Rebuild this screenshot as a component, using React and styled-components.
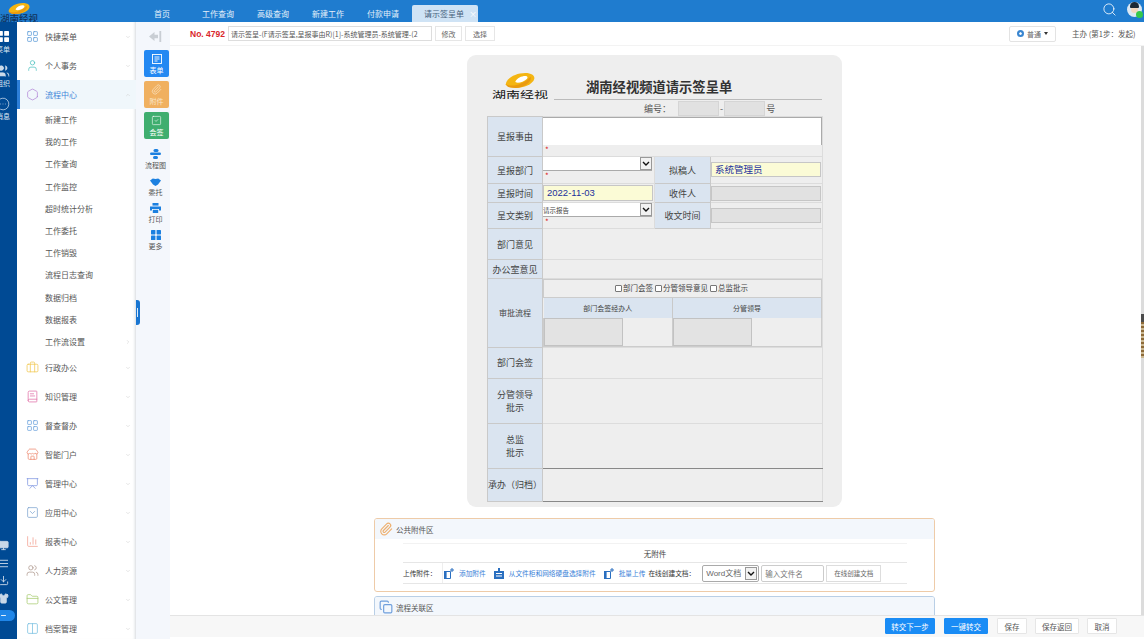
import React from "react";
import styled, { createGlobalStyle } from "styled-components";
import {
  LayoutGrid, Users, MessageCircleMore, Monitor, AlignJustify, Download, Shirt, Minus,
  User, Hexagon, ChevronDown, ChevronUp, ChevronRight, Briefcase, BookText, Store, Presentation,
  SquareChevronDown, ChartColumn, FolderClosed, Columns2, Paperclip,
  SquareCheck, Search, Copy,
} from "lucide-react";

const CJK = `"Noto Sans CJK SC", "Liberation Sans", sans-serif`;

const selectArrow = `url("data:image/svg+xml,%3Csvg xmlns='http://www.w3.org/2000/svg' width='12' height='13'%3E%3Crect x='.5' y='.5' width='11' height='12' fill='%23f2f2f2' stroke='%23999'/%3E%3Cpath d='M3 5l3 3 3-3' fill='none' stroke='%23111' stroke-width='1.4'/%3E%3C/svg%3E")`;

const GlobalStyle = createGlobalStyle`
  html, body { margin: 0; padding: 0; height: 100%; overflow: hidden; background: #fff; }
  * { box-sizing: border-box; }
  body { font-family: ${CJK}; font-size: 8px; color: #444; }
`;

const Page = styled.div`
  width: 1144px;
  height: 639px;
  display: flex;
  flex-direction: column;
  overflow: hidden;
`;

const Header = styled.header`
  height: 22px;
  flex: none;
  display: flex;
  align-items: flex-end;
  background: #1f7ccf;
`;

const LogoBox = styled.div`
  width: 38px;
  height: 22px;
  flex: none;
  overflow: hidden;
  display: flex;
  flex-direction: column;
  align-items: center;
  color: #10335c;
  font-size: 9.5px;
  font-weight: 500;
  line-height: 9px;
  white-space: nowrap;

  svg { display: block; margin-top: 3px; flex: none; }
`;

const HeaderTabs = styled.nav`
  flex: 1;
  display: flex;
  align-items: flex-end;
  height: 22px;
  padding-left: 116px;
`;

const HeaderTab = styled.a`
  height: 17px;
  line-height: 17px;
  font-size: 8px;
  margin-right: ${(p) => p.$gap}px;
  color: #e4f0fa;
  white-space: nowrap;
`;

const ActiveTab = styled.a`
  width: 66px;
  height: 17px;
  line-height: 17px;
  padding-left: 12px;
  border-radius: 2px 2px 0 0;
  background: #cfe3f5;
  color: #47627d;
  font-size: 8px;
  white-space: nowrap;
  display: flex;
  gap: 5px;

  i { font-style: normal; color: #fff; font-size: 8px; }
`;

const HeaderRight = styled.div`
  display: flex;
  align-items: center;
  gap: 10px;
  height: 22px;
  padding-right: 2px;
  color: #fff;

  > svg { margin-bottom: 3px; }
`;

const Avatar = styled.div`
  position: relative;
  width: 15px;
  height: 15px;
  margin-bottom: 3px;
  border-radius: 50%;
  background: #dbe8f3;

  &::before {
    content: "";
    position: absolute;
    left: 3px;
    top: 0;
    width: 9px;
    height: 6px;
    border-radius: 5px 5px 1px 1px;
    background: #1d2a36;
    z-index: 1;
  }
  &::after {
    content: "";
    position: absolute;
    left: 4px;
    top: 4px;
    width: 7px;
    height: 7px;
    border-radius: 50%;
    background: #f3d7bd;
  }
`;

const OnlineDot = styled.span`
  position: absolute;
  right: -1px;
  bottom: -1px;
  width: 7px;
  height: 7px;
  border-radius: 50%;
  background: #35c84a;
  z-index: 2;
`;

const Body = styled.div`
  flex: 1;
  min-height: 0;
  display: flex;
`;

const Rail = styled.aside`
  width: 17px;
  flex: none;
  background: #004a94;
  overflow: hidden;
  display: flex;
  flex-direction: column;
`;

const RailInner = styled.div`
  width: 34px;
  margin-left: -14px;
  flex: 1;
  display: flex;
  flex-direction: column;
  align-items: center;
  padding-top: 9px;
  color: #dbe7f3;
`;

const RailItem = styled.div`
  height: 33px;
  display: flex;
  flex-direction: column;
  align-items: center;
  font-size: 7px;
  line-height: 9px;
  gap: ${(p) => p.$gap || 1}px;
`;

const RailBottom = styled.div`
  margin-top: auto;
  display: flex;
  flex-direction: column;
  align-items: center;
  gap: 6.5px;
  padding-bottom: 18px;
  color: #c9d8e8;
`;

const RailPill = styled.span`
  width: 24px;
  height: 11px;
  border-radius: 6px;
  background: #1f86e8;
  display: flex;
  align-items: center;
  justify-content: center;
  color: #fff;
`;

const Sidebar = styled.aside`
  width: 119px;
  flex: none;
  overflow: hidden;
  background: #fff;
  box-shadow: inset -3px 0 3px -2px #d5d9de;
`;

const MenuRow = styled.div`
  height: 29px;
  display: flex;
  align-items: center;
  padding: 0 5px 0 6px;
  gap: 6px;
  font-size: 8px;
  color: ${(p) => (p.$active ? "#3f86d8" : "#555")};
  background: ${(p) => (p.$active ? "#f0f7fb" : "transparent")};
  border-left: 3px solid ${(p) => (p.$active ? "#2d7fd8" : "transparent")};

  span { flex: 1; }
`;

const SubRow = styled.div`
  height: 22.2px;
  line-height: 22px;
  padding-left: 28px;
  padding-right: 5px;
  display: flex;
  align-items: center;
  justify-content: space-between;
  font-size: 8px;
  color: #555;
`;

const Tools = styled.div`
  position: relative;
  width: 34px;
  flex: none;
  padding-right: 1px;
  background: #f4f7fc;
  display: flex;
  flex-direction: column;
  align-items: flex-end;
`;

const CollapseHandle = styled.span`
  position: absolute;
  left: 0;
  top: 278px;
  width: 4px;
  height: 25px;
  border-radius: 0 3px 3px 0;
  background: #1976d2;

  &::after {
    content: "";
    position: absolute;
    left: 1px;
    top: 8px;
    width: 1px;
    height: 9px;
    background: #dcecfb;
  }
`;

const BackRow = styled.div`
  width: 33px;
  height: 28px;
  padding-left: 13px;
  display: flex;
  align-items: center;
  color: #c9ced4;
`;

const ToolCard = styled.div`
  width: 25px;
  height: 27px;
  margin-bottom: 4px;
  border-radius: 2px;
  background: ${(p) => p.$color};
  color: ${(p) => p.$text || "#fff"};
  font-size: 7px;
  line-height: 8px;
  display: flex;
  flex-direction: column;
  align-items: center;
  justify-content: center;
  gap: 2px;
`;

const ToolLink = styled.div`
  width: 25px;
  height: 27px;
  margin-right: 1px;
  color: #555;
  font-size: 7px;
  line-height: 9px;
  display: flex;
  flex-direction: column;
  align-items: center;
  justify-content: flex-end;
  gap: 2px;
  white-space: nowrap;

  svg { color: #1c80e0; }
`;

const Main = styled.main`
  flex: 1;
  min-width: 0;
  display: flex;
  flex-direction: column;
  background: #fff;
`;

const TopBar = styled.div`
  height: 24px;
  flex: none;
  display: flex;
  align-items: center;
  padding: 0 4px 0 20px;
  border-bottom: 1px solid #f3f3f3;
`;

const FlowNo = styled.b`
  color: #d9262c;
  font-family: "Liberation Sans", sans-serif;
  font-size: 8.5px;
  margin-right: 3px;
  white-space: nowrap;
`;

const FlowName = styled.input`
  width: 204px;
  height: 15px;
  border: 1px solid #ddd;
  padding: 0 2px;
  font: 7px ${CJK};
  color: #555;
  margin-right: 3px;
`;

const GhostButton = styled.button`
  height: 15px;
  width: ${(p) => p.$w}px;
  margin-right: 3px;
  padding: 0;
  background: #fff;
  border: 1px solid #e6e6e6;
  font: 7px ${CJK};
  color: #666;
`;

const Level = styled.button`
  margin-left: auto;
  width: 47px;
  height: 16px;
  padding: 0;
  background: #fff;
  border: 1px solid #e3e3e3;
  border-radius: 2px;
  font: 7px ${CJK};
  color: #666;
  display: flex;
  align-items: center;
  justify-content: center;
  gap: 3px;

  i {
    width: 7px;
    height: 7px;
    border-radius: 50%;
    background: #3a86d0;
    border: 2px solid #3a86d0;
    box-shadow: inset 0 0 0 2px #fff;
  }
  u {
    border-left: 2.5px solid transparent;
    border-right: 2.5px solid transparent;
    border-top: 3px solid #333;
  }
`;

const StepText = styled.span`
  margin-left: 16px;
  width: 68px;
  font-size: 7.5px;
  color: #555;
  white-space: nowrap;
`;

const Content = styled.div`
  position: relative;
  flex: 1;
  min-height: 0;
  overflow: hidden;
  padding: 9px 5px 0 0;
`;

const ScrollTrack = styled.span`
  position: absolute;
  right: 0;
  top: 0;
  bottom: 0;
  width: 3px;
  background: #dcdcdc;
`;

const ScrollThumb = styled.span`
  position: absolute;
  right: 0;
  top: 268px;
  width: 3px;
  height: 44px;
  background: repeating-linear-gradient(#8d6a38 0 2px, #cbb892 2px 4px);
  border-top: 8px solid #4c4c4c;
`;

const FormPanel = styled.div`
  width: 375px;
  height: 452px;
  margin: 0 auto 11px;
  padding: 15px 20px 0;
  background: #eee;
  border-radius: 9px;
`;

const TitleBlock = styled.div`
  display: flex;
  height: 30px;
`;

const BrandLogo = styled.div`
  width: 67px;
  flex: none;
  padding-top: 3px;
  display: flex;
  flex-direction: column;
  align-items: flex-start;
  font-size: 14px;
  line-height: 12px;
  color: #111;
  white-space: nowrap;

  svg { margin: 0 0 2px 18px; display: block; flex: none; }
  span { margin-left: 5px; transform: scaleY(0.68); transform-origin: top left; }
`;

const FormTitle = styled.h1`
  flex: 1;
  margin: 0;
  padding: 7px 0 0 32px;
  height: 30px;
  border-bottom: 1px solid #bbb;
  font-size: 13.3px;
  line-height: 20px;
  font-weight: 700;
  color: #333;
  white-space: nowrap;
`;

const NumberRow = styled.div`
  height: 16px;
  display: flex;
  align-items: center;
  padding-left: 157px;
  font-size: 9px;
  color: #555;
  gap: 1px;

  span:first-child { margin-right: 6px; }
`;

const NumberInput = styled.span`
  width: 41px;
  height: 15px;
  background: #e1e1e1;
  border: 1px solid #d5d5d5;
`;

const FormTable = styled.table`
  width: 335px;
  table-layout: fixed;
  border-collapse: collapse;
  border-spacing: 0;
`;

const Row = styled.tr`
  height: ${(p) => p.$h}px;
`;

const Label = styled.td`
  background: #dae4f0;
  border: 1px solid #c9c9c9;
  text-align: center;
  font-size: ${(p) => p.$size || 9}px;
  line-height: 13px;
  color: #444;
  padding: 0;
  white-space: nowrap;
`;

const Cell = styled.td`
  position: relative;
  background: #eee;
  border: 1px solid #dcdcdc;
  border-bottom-color: ${(p) => p.$line || "#dcdcdc"};
  padding: ${(p) => p.$pad || 0};
  vertical-align: top;
`;

const Star = styled.div`
  color: #d22;
  font-size: 8px;
  line-height: 8px;
  padding: 1px 0 0 2px;
`;

const Area = styled.textarea`
  display: block;
  width: 100%;
  height: 28px;
  margin: 0;
  border: 1px solid #aaa;
  border-width: 1px 1px 0 0;
  background: #fff;
  resize: none;
  border-radius: 0;
`;

const Pick = styled.select`
  display: block;
  width: 109px;
  height: ${(p) => p.$h}px;
  margin: 0;
  padding: 0;
  font: 6.5px ${CJK};
  color: #444;
  appearance: none;
  background: #fff ${selectArrow} no-repeat right top;
  border: 0;
  border-bottom: 1px solid #aaa;
  border-radius: 0;
`;

const Field = styled.div`
  width: 110px;
  height: ${(p) => p.$h || 15}px;
  margin-top: ${(p) => p.$top || 0}px;
  line-height: ${(p) => (p.$h || 15) - 2}px;
  padding-left: 3px;
  font-family: "Liberation Sans", ${CJK};
  font-size: 9.5px;
  color: #22309c;
  background: ${(p) => (p.$filled ? "#fbfbd6" : "#e1e1e1")};
  border: 1px solid #c6c6c6;
  white-space: nowrap;
`;

const ApproveTable = styled.table`
  width: 100%;
  table-layout: fixed;
  border-collapse: collapse;
`;

const Checks = styled.td`
  height: 18px;
  text-align: center;
  font-size: 7.5px;
  line-height: 10px;
  color: #444;
  border: 1px solid #ccc;
  padding: 0;

  label { display: inline-flex; align-items: center; gap: 1px; margin-right: 2px; }
  input { width: 7px; height: 7px; margin: 0; appearance: none; background: #fff; border: 1px solid #777; border-radius: 1px; }
`;

const ApproveHead = styled.td`
  height: 20px;
  background: #dae4f0;
  border-right: 1px solid #c9c9c9;
  text-align: center;
  font-size: 7px;
  line-height: 10px;
  color: #444;
  padding: 0;
`;

const SignCell = styled.td`
  height: 28px;
  padding: 0;
  border: 1px solid #ccc;
  border-top: 0;
  vertical-align: top;
`;

const SignBox = styled.div`
  width: 79px;
  height: 28px;
  background: #e3e3e3;
  border: 1px solid #c2c2c2;
`;

const Section = styled.section`
  width: 561px;
  margin: 0 auto ${(p) => p.$gap || 0}px;
  border: 1px solid ${(p) => p.$border};
  border-radius: 3px;
  background: #fff;
  overflow: hidden;
`;

const SectionHead = styled.div`
  height: 20px;
  padding-left: 4px;
  display: flex;
  align-items: center;
  gap: 3px;
  background: #f3f7fc;
  font-size: 7.5px;
  color: #555;
  svg { color: ${(p) => p.$icon}; }
`;

const AttachBody = styled.div`
  margin: 4px 27px 7px 28px;
  border-top: 1px solid #f2f2f2;
`;

const NoFile = styled.div`
  height: 19px;
  line-height: 19px;
  text-align: center;
  font-size: 7.5px;
  color: #444;
  border-bottom: 1px solid #e6e6e6;
`;

const UploadRow = styled.div`
  height: 21px;
  display: flex;
  align-items: center;
  border-bottom: 1px solid #e6e6e6;
  font-size: 6.7px;
  color: #333;
  white-space: nowrap;
`;

const UploadLabel = styled.span`
  width: 40px;
  height: 100%;
  line-height: 20px;
  border-right: 1px solid #eee;
  margin-right: 1px;
`;

const UploadLink = styled.a`
  display: inline-flex;
  align-items: center;
  gap: 5px;
  margin-right: ${(p) => p.$gap}px;
  color: #3a82d8;
  svg { color: #2a6fc0; flex: none; }
`;

const DocType = styled.select`
  width: 57px;
  height: 17px;
  margin: 0 2px 0 7px;
  padding: 0 0 0 3px;
  font: 8px "Liberation Sans", ${CJK};
  color: #666;
  appearance: none;
  border: 1px solid #aaa;
  border-radius: 2px;
  background: #fff ${selectArrow} no-repeat right 1px top 1px;
`;

const DocName = styled.input`
  width: 63px;
  height: 17px;
  margin-right: 2px;
  padding: 0 3px;
  font: 7.5px ${CJK};
  border: 1px solid #ccc;
  border-radius: 2px;

  &::placeholder { color: #777; }
`;

const CreateButton = styled.button`
  width: 55px;
  height: 17px;
  padding: 0;
  font: 6.5px ${CJK};
  color: #666;
  background: #fff;
  border: 1px solid #ddd;
`;

const Footer = styled.footer`
  height: 22px;
  margin-bottom: 2px;
  padding: 0 27px 1px 0;
  flex: none;
  display: flex;
  align-items: center;
  justify-content: flex-end;
  gap: 8px;
  background: #f7f7f7;
  border-top: 1px solid #e4e4e4;
`;

const ActionButton = styled.button`
  width: ${(p) => p.$w}px;
  height: 16px;
  padding: 0;
  margin-right: ${(p) => (p.$primary ? 1 : 0)}px;
  font: 7.5px ${CJK};
  border-radius: 1px;
  color: ${(p) => (p.$primary ? "#fff" : "#555")};
  background: ${(p) => (p.$primary ? "#1a8cf5" : "#fff")};
  border: 1px solid ${(p) => (p.$primary ? "#1a8cf5" : "#e6e6e6")};
`;

const subItems = ["新建工作", "我的工作", "工作查询", "工作监控", "超时统计分析", "工作委托", "工作销毁", "流程日志查询", "数据归档", "数据报表"];

const topMenus = [
  { name: "快捷菜单", icon: LayoutGrid, color: "#5b9bd8" },
  { name: "个人事务", icon: User, color: "#4fc2c0" },
];

const lowerMenus = [
  { name: "行政办公", icon: Briefcase, color: "#f0c850" },
  { name: "知识管理", icon: BookText, color: "#e070a8" },
  { name: "督查督办", icon: LayoutGrid, color: "#6da3dc" },
  { name: "智能门户", icon: Store, color: "#ee8a70" },
  { name: "管理中心", icon: Presentation, color: "#7f97e0" },
  { name: "应用中心", icon: SquareChevronDown, color: "#7fa5cf" },
  { name: "报表中心", icon: ChartColumn, color: "#f2a090" },
  { name: "人力资源", icon: Users, color: "#b09a90" },
  { name: "公文管理", icon: FolderClosed, color: "#a8cc70" },
  { name: "档案管理", icon: Columns2, color: "#78c0e0" },
];

function Menu({ item }) {
  const Icon = item.icon;
  return (
    <MenuRow>
      <Icon size={13} color={item.color} strokeWidth={1.4} />
      <span>{item.name}</span>
      <ChevronDown size={6} color="#ccc" />
    </MenuRow>
  );
}

function AppLogo({ width }) {
  return (
    <svg width={width} height={width / 2} viewBox="0 0 40 20">
      <path d="M1 15C2 7 14 0 27 0c9 0 13 4 12 8-2 7-14 12-25 12-6 0-11-1-13-5z" fill="#f4b512" />
      <path d="M1 15c5 3 14 2 20-1 5-2 10-5 13-9 3 6-8 15-20 15-6 0-11-1-13-5z" fill="#ea9a10" />
      <path d="M14 11c2-4 8-7 13-7 3 0 4 2 2 4-3 3-8 5-12 5-2 0-4-1-3-2z" fill="#fff" />
    </svg>
  );
}

function SolidGrid({ size, color }) {
  return (
    <svg width={size} height={size} viewBox="0 0 10 10" fill={color}>
      <rect x="0" y="0" width="4.4" height="4.4" rx=".6" />
      <rect x="5.6" y="0" width="4.4" height="4.4" rx=".6" />
      <rect x="0" y="5.6" width="4.4" height="4.4" rx=".6" />
      <rect x="5.6" y="5.6" width="4.4" height="4.4" rx=".6" />
    </svg>
  );
}

function BackIcon() {
  return (
    <svg width="13" height="11" viewBox="0 0 13 11" fill="currentColor">
      <path d="M0 5.5 5.5 1v2.8H9v3.4H5.5V10z" />
      <rect x="10.4" y="0" width="1.8" height="11" />
    </svg>
  );
}

function DocIcon() {
  return (
    <svg width="10" height="10" viewBox="0 0 10 10" fill="none" stroke="currentColor" strokeWidth=".9">
      <rect x=".5" y=".5" width="9" height="9" />
      <path d="M2.5 3h5M2.5 5h5M2.5 7h3" />
    </svg>
  );
}

function FlowIcon() {
  return (
    <svg width="11" height="10" viewBox="0 0 11 10" fill="currentColor">
      <rect x="3.5" y="0" width="5" height="3" rx="1.5" />
      <rect x="0" y="3.5" width="11" height="2.4" rx="1.2" />
      <rect x="3" y="7" width="5" height="3" rx="1.5" />
    </svg>
  );
}

function EntrustIcon() {
  return (
    <svg width="11" height="8" viewBox="0 0 11 8" fill="currentColor">
      <path d="M0 2.4 2.8.4l2.7.7L8.2.4 11 2.4 8 6.6 5.5 8 3 6.6z" />
    </svg>
  );
}

function PrintIcon() {
  return (
    <svg width="11" height="10" viewBox="0 0 11 10" fill="currentColor">
      <rect x="2.5" y="0" width="6" height="2.6" />
      <path d="M0 3.4h11v4H9V6H2v1.4H0z" />
      <rect x="2.8" y="6.8" width="5.4" height="3.2" />
    </svg>
  );
}

function AddFileIcon() {
  return (
    <svg width="10" height="11" viewBox="0 0 10 11" fill="none" stroke="currentColor">
      <path d="M.5 3.5h6v7h-6z" />
      <rect x="0" y="3" width="2.6" height="8" fill="currentColor" stroke="none" />
      <path d="M8 0v4M6 2h4" />
    </svg>
  );
}

function DiskIcon() {
  return (
    <svg width="10" height="11" viewBox="0 0 10 11" fill="currentColor">
      <path d="M0 3h10v8H0z" />
      <rect x="2" y="5" width="6" height="1" fill="#fff" />
      <rect x="2" y="7.5" width="6" height="1" fill="#fff" />
      <rect x="4" y="0" width="2" height="3" />
    </svg>
  );
}

export default function App() {
  return (
    <>
      <GlobalStyle />
      <Page>
        <Header>
          <LogoBox>
            <AppLogo width={22} />
            湖南经视
          </LogoBox>
          <HeaderTabs>
            <HeaderTab $gap={32}>首页</HeaderTab>
            <HeaderTab $gap={23}>工作查询</HeaderTab>
            <HeaderTab $gap={23}>高级查询</HeaderTab>
            <HeaderTab $gap={23}>新建工作</HeaderTab>
            <HeaderTab $gap={13}>付款申请</HeaderTab>
            <ActiveTab>请示签呈单<i>×</i></ActiveTab>
          </HeaderTabs>
          <HeaderRight>
            <Search size={15} strokeWidth={1.3} />
            <Avatar><OnlineDot /></Avatar>
          </HeaderRight>
        </Header>
        <Body>
          <Rail>
            <RailInner>
              <RailItem $gap={3}><SolidGrid size={11} color="#fff" />菜单</RailItem>
              <RailItem><Users size={14} fill="#c9d8e8" strokeWidth={1} />组织</RailItem>
              <RailItem><MessageCircleMore size={14} strokeWidth={1.2} />消息</RailItem>
              <RailBottom>
                <Monitor size={11} fill="#c9d8e8" />
                <AlignJustify size={11} />
                <Download size={11} />
                <Shirt size={11} fill="#c9d8e8" />
                <RailPill><Minus size={7} strokeWidth={3} /></RailPill>
              </RailBottom>
            </RailInner>
          </Rail>
          <Sidebar>
            {topMenus.map((m) => <Menu key={m.name} item={m} />)}
            <MenuRow $active>
              <Hexagon size={13} color="#b48ad8" strokeWidth={1.4} />
              <span>流程中心</span>
              <ChevronUp size={6} color="#ccc" />
            </MenuRow>
            {subItems.map((s) => <SubRow key={s}>{s}</SubRow>)}
            <SubRow>工作流设置<ChevronRight size={6} color="#ccc" /></SubRow>
            {lowerMenus.map((m) => <Menu key={m.name} item={m} />)}
          </Sidebar>
          <Tools>
            <CollapseHandle />
            <BackRow><BackIcon /></BackRow>
            <ToolCard $color="#2388f2"><DocIcon />表单</ToolCard>
            <ToolCard $color="#f0b060" $text="#f9e6c8"><Paperclip size={11} strokeWidth={1.5} />附件</ToolCard>
            <ToolCard $color="#3fae6f"><SquareCheck size={11} strokeWidth={1.3} />会签</ToolCard>
            <ToolLink><FlowIcon />流程图</ToolLink>
            <ToolLink><EntrustIcon />委托</ToolLink>
            <ToolLink><PrintIcon />打印</ToolLink>
            <ToolLink><SolidGrid size={10} color="currentColor" />更多</ToolLink>
          </Tools>
          <Main>
            <TopBar>
              <FlowNo>No. 4792</FlowNo>
              <FlowName readOnly value="请示签呈-(F请示签呈,呈报事由R)[1]-系统管理员-系统管理-(2" />
              <GhostButton $w={27}>修改</GhostButton>
              <GhostButton $w={30}>选择</GhostButton>
              <Level><i />普通<u /></Level>
              <StepText>主办 (第1步：发起)</StepText>
            </TopBar>
            <Content>
              <ScrollTrack />
              <ScrollThumb />
              <FormPanel>
                <TitleBlock>
                  <BrandLogo>
                    <AppLogo width={30} />
                    <span>湖南经视</span>
                  </BrandLogo>
                  <FormTitle>湖南经视频道请示签呈单</FormTitle>
                </TitleBlock>
                <NumberRow>
                  <span>编号：</span>
                  <NumberInput />
                  <span>-</span>
                  <NumberInput />
                  <span>号</span>
                </NumberRow>
                <FormTable>
                  <colgroup>
                    <col width="55" /><col width="112" /><col width="56" /><col width="112" />
                  </colgroup>
                  <tbody>
                    <Row $h={40}>
                      <Label>呈报事由</Label>
                      <Cell colSpan={3}><Area /><Star>*</Star></Cell>
                    </Row>
                    <Row $h={27}>
                      <Label>呈报部门</Label>
                      <Cell><Pick $h={14} /><Star>*</Star></Cell>
                      <Label>拟稿人</Label>
                      <Cell $pad="5px 0 0"><Field $filled>系统管理员</Field></Cell>
                    </Row>
                    <Row $h={19}>
                      <Label>呈报时间</Label>
                      <Cell $pad="1px 0 0"><Field $filled $h={16}>2022-11-03</Field></Cell>
                      <Label>收件人</Label>
                      <Cell $pad="2px 0 0"><Field $h={15} /></Cell>
                    </Row>
                    <Row $h={26}>
                      <Label>呈文类别</Label>
                      <Cell>
                        <Pick $h={14}><option>请示报告</option></Pick>
                        <Star>*</Star>
                      </Cell>
                      <Label>收文时间</Label>
                      <Cell $pad="5px 0 0"><Field $h={15} /></Cell>
                    </Row>
                    <Row $h={31}>
                      <Label>部门意见</Label>
                      <Cell colSpan={3} />
                    </Row>
                    <Row $h={19}>
                      <Label>办公室意见</Label>
                      <Cell colSpan={3} />
                    </Row>
                    <Row $h={68}>
                      <Label $size={8}>审批流程</Label>
                      <Cell colSpan={3}>
                        <ApproveTable>
                          <colgroup>
                            <col width="129" /><col />
                          </colgroup>
                          <tbody>
                            <tr>
                              <Checks colSpan={2}>
                                <label><input type="checkbox" />部门会签</label>
                                <label><input type="checkbox" />分管领导意见</label>
                                <label><input type="checkbox" />总监批示</label>
                              </Checks>
                            </tr>
                            <tr>
                              <ApproveHead>部门会签经办人</ApproveHead>
                              <ApproveHead>分管领导</ApproveHead>
                            </tr>
                            <tr>
                              <SignCell><SignBox /></SignCell>
                              <SignCell><SignBox /></SignCell>
                            </tr>
                          </tbody>
                        </ApproveTable>
                      </Cell>
                    </Row>
                    <Row $h={31}>
                      <Label>部门会签</Label>
                      <Cell colSpan={3} />
                    </Row>
                    <Row $h={45}>
                      <Label>分管领导<br />批示</Label>
                      <Cell colSpan={3} />
                    </Row>
                    <Row $h={45}>
                      <Label>总监<br />批示</Label>
                      <Cell colSpan={3} $line="#888" />
                    </Row>
                    <Row $h={33}>
                      <Label>承办（归档）</Label>
                      <Cell colSpan={3} $line="#888" />
                    </Row>
                  </tbody>
                </FormTable>
              </FormPanel>
              <Section $border="#eecba8" $gap={4}>
                <SectionHead $icon="#eeb070"><Paperclip size={14} />公共附件区</SectionHead>
                <AttachBody>
                  <NoFile>无附件</NoFile>
                  <UploadRow>
                    <UploadLabel>上传附件：</UploadLabel>
                    <UploadLink $gap={8}><AddFileIcon />添加附件</UploadLink>
                    <UploadLink $gap={8}><DiskIcon />从文件柜和网络硬盘选择附件</UploadLink>
                    <UploadLink $gap={3}><AddFileIcon />批量上传</UploadLink>
                    在线创建文档：
                    <DocType defaultValue="Word文档"><option>Word文档</option></DocType>
                    <DocName placeholder="输入文件名" />
                    <CreateButton>在线创建文档</CreateButton>
                  </UploadRow>
                </AttachBody>
              </Section>
              <Section $border="#b9cfe6">
                <SectionHead $icon="#6f9fdc"><Copy size={14} />流程关联区</SectionHead>
              </Section>
            </Content>
            <Footer>
              <ActionButton $primary $w={50}>转交下一步</ActionButton>
              <ActionButton $primary $w={44}>一键转交</ActionButton>
              <ActionButton $w={30}>保存</ActionButton>
              <ActionButton $w={44}>保存返回</ActionButton>
              <ActionButton $w={30}>取消</ActionButton>
            </Footer>
          </Main>
        </Body>
      </Page>
    </>
  );
}
